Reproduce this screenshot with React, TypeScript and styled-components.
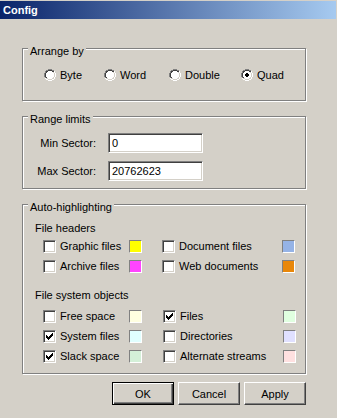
import React from 'react';
import styled, { createGlobalStyle } from 'styled-components';

const GlobalStyle = createGlobalStyle`
    html, body {
        margin: 0;
        padding: 0;
        background: #d4d0c8;
    }
    body {
        font-family: "Liberation Sans", Arial, sans-serif;
        font-size: 11px;
        color: #000;
    }
`;

const Window = styled.div`
    width: 337px;
    height: 418px;
    padding-top: 1px;
    box-sizing: border-box;
    background: #d4d0c8;
`;

const TitleBar = styled.div`
    width: 336px;
    height: 18px;
    display: flex;
    align-items: center;
    padding-left: 3px;
    box-sizing: border-box;
    background: linear-gradient(to right, #0a246a, #a6caf0);
    color: #fff;
    font-weight: bold;
    font-size: 11px;
    line-height: 18px;
`;

const Body = styled.div`
    display: flex;
    flex-direction: column;
    gap: 7px;
    padding: 21px 0 0 22px;
    width: 306px;
`;

const Group = styled.fieldset<{ $pad: string }>`
    margin: 0;
    width: 284px;
    box-sizing: border-box;
    min-width: 0;
    padding: ${(p) => p.$pad};
    border: 1px solid #808080;
    box-shadow: inset 1px 1px 0 #fff, 1px 1px 0 #fff;
`;

const Legend = styled.legend`
    margin-left: 5px;
    padding: 5px 2px 0;
    line-height: 12px;
    background: #d4d0c8;
`;

const RadioRow = styled.div`
    display: grid;
    grid-template-columns: 60px 65px 72px auto;
    padding-left: 21px;
    height: 12px;
`;

const Option = styled.label`
    display: flex;
    align-items: center;
    gap: 4px;
    line-height: 12px;
    white-space: nowrap;
`;

const FieldGrid = styled.div`
    display: grid;
    grid-template-columns: 73px 95px;
    column-gap: 12px;
    row-gap: 8px;
    align-items: center;
`;

const FieldLabel = styled.span`
    text-align: right;
    line-height: 13px;
`;

const TextBox = styled.input`
    box-sizing: border-box;
    width: 95px;
    height: 20px;
    margin: 0;
    padding: 0 3px;
    font: inherit;
    font-size: 11px;
    color: #000;
    background: #fff;
    border: 1px solid;
    border-color: #808080 #fff #fff #808080;
    box-shadow: inset 1px 1px 0 #404040, inset -1px -1px 0 #d4d0c8;
    outline: none;
`;

const Highlights = styled.div`
    padding-left: 11px;
`;

const Section = styled.div`
    display: flex;
    flex-direction: column;
    & + & {
        margin-top: 16px;
    }
`;

const SubHeading = styled.div<{ $after: number }>`
    line-height: 13px;
    margin: 0 0 ${(p) => p.$after}px 1px;
`;

const EntryGrid = styled.div<{ $gap: number }>`
    display: grid;
    grid-template-columns: 99px 133px;
    column-gap: ${(p) => p.$gap}px;
    row-gap: 7px;
    padding-left: 9px;
`;

const Entry = styled.div`
    display: flex;
    align-items: center;
    height: 13px;
`;

const EntryLabel = styled.span`
    flex: 1;
    margin-left: 4px;
    line-height: 13px;
    white-space: nowrap;
`;

const Box = styled.span`
    flex: none;
    width: 13px;
    height: 13px;
    box-sizing: border-box;
    background: #fff;
    border: 1px solid;
    border-color: #808080 #fff #fff #808080;
    box-shadow: inset 1px 1px 0 #404040, inset -1px -1px 0 #d4d0c8;
    display: flex;
    align-items: center;
    justify-content: center;
`;

const Swatch = styled.span<{ $color: string }>`
    flex: none;
    width: 13px;
    height: 13px;
    box-sizing: border-box;
    background: ${(p) => p.$color};
    border: 1px solid;
    border-color: #808080 #fff #fff #808080;
`;

const ButtonRow = styled.div`
    display: flex;
    justify-content: flex-end;
    gap: 4px;
    width: 284px;
    margin-top: 1px;
`;

const Button = styled.button<{ $default?: boolean }>`
    width: 62px;
    height: 23px;
    margin: 0;
    padding: 0;
    font: inherit;
    font-size: 11px;
    color: #000;
    background: #d4d0c8;
    box-sizing: border-box;
    border: 1px solid;
    border-color: ${(p) => (p.$default ? '#000' : '#fff #404040 #404040 #fff')};
    box-shadow: ${(p) =>
        p.$default
            ? 'inset 1px 1px 0 #fff, inset -1px -1px 0 #404040, inset -2px -2px 0 #808080'
            : 'inset -1px -1px 0 #808080'};
`;

// classic 12x12 radio bitmap
const radioMap = [
    '....GGGG....',
    '..GGKKKKGG..',
    '.GKKWWWWKKH.',
    '.GKWWWWWWLH.',
    'GKWWWWWWWWLH',
    'GKWWWWWWWWLH',
    'GKWWWWWWWWLH',
    'GKWWWWWWWWLH',
    '.GKWWWWWWLH.',
    '.HLLWWWWLLH.',
    '..HHLLLLHH..',
    '....HHHH....',
];
const radioColors: Record<string, string> = {
    G: '#808080',
    K: '#404040',
    W: '#ffffff',
    L: '#d4d0c8',
    H: '#ffffff',
};
const dot = [
    [5, 4], [6, 4],
    [4, 5], [5, 5], [6, 5], [7, 5],
    [4, 6], [5, 6], [6, 6], [7, 6],
    [5, 7], [6, 7],
];

const RadioIcon = styled.svg`
    flex: none;
`;

const Radio = ({ checked }: { checked?: boolean }) => (
    <RadioIcon width="12" height="12" viewBox="0 0 12 12" shapeRendering="crispEdges">
        {radioMap.flatMap((row, y) =>
            row.split('').map((c, x) =>
                c === '.' ? null : <rect key={`${x}-${y}`} x={x} y={y} width="1" height="1" fill={radioColors[c]} />
            )
        )}
        {checked && dot.map(([x, y]) => <rect key={`d${x}-${y}`} x={x} y={y} width="1" height="1" fill="#000" />)}
    </RadioIcon>
);

const Check = () => (
    <svg width="7" height="7" viewBox="0 0 7 7" shapeRendering="crispEdges">
        {[2, 3, 4, 3, 2, 1, 0].map((top, x) => (
            <rect key={x} x={x} y={top} width="1" height="3" fill="#000" />
        ))}
    </svg>
);

const CheckBox = ({ checked }: { checked?: boolean }) => <Box>{checked && <Check />}</Box>;

type Item = { label: string; color: string; checked?: boolean };

const headers: Item[] = [
    { label: 'Graphic files', color: '#ffff00' },
    { label: 'Document files', color: '#95b3e6' },
    { label: 'Archive files', color: '#ff44ff' },
    { label: 'Web documents', color: '#e8870a' },
];

const fsObjects: Item[] = [
    { label: 'Free space', color: '#ffffe0' },
    { label: 'Files', color: '#e0ffe0', checked: true },
    { label: 'System files', color: '#e0ffff', checked: true },
    { label: 'Directories', color: '#e0e0ff' },
    { label: 'Slack space', color: '#d4f0d8', checked: true },
    { label: 'Alternate streams', color: '#ffe0e0' },
];

const Entries = ({ items, gap }: { items: Item[]; gap: number }) => (
    <EntryGrid $gap={gap}>
        {items.map((it) => (
            <Entry key={it.label}>
                <CheckBox checked={it.checked} />
                <EntryLabel>{it.label}</EntryLabel>
                <Swatch $color={it.color} />
            </Entry>
        ))}
    </EntryGrid>
);

const arrange = ['Byte', 'Word', 'Double', 'Quad'];

export default function App() {
    return (
        <>
            <GlobalStyle />
            <Window>
                <TitleBar>Config</TitleBar>
                <Body>
                    <Group $pad="12px 0 19px">
                        <Legend>Arrange by</Legend>
                        <RadioRow>
                            {arrange.map((a) => (
                                <Option key={a}>
                                    <Radio checked={a === 'Quad'} />
                                    {a}
                                </Option>
                            ))}
                        </RadioRow>
                    </Group>

                    <Group $pad="8px 0 7px">
                        <Legend>Range limits</Legend>
                        <FieldGrid>
                            <FieldLabel>Min Sector:</FieldLabel>
                            <TextBox defaultValue="0" />
                            <FieldLabel>Max Sector:</FieldLabel>
                            <TextBox defaultValue="20762623" />
                        </FieldGrid>
                    </Group>

                    <Group $pad="9px 0 10px">
                        <Legend>Auto-highlighting</Legend>
                        <Highlights>
                            <Section>
                                <SubHeading $after={5}>File headers</SubHeading>
                                <Entries items={headers} gap={20} />
                            </Section>
                            <Section>
                                <SubHeading $after={8}>File system objects</SubHeading>
                                <Entries items={fsObjects} gap={21} />
                            </Section>
                        </Highlights>
                    </Group>

                    <ButtonRow>
                        <Button $default>OK</Button>
                        <Button>Cancel</Button>
                        <Button>Apply</Button>
                    </ButtonRow>
                </Body>
            </Window>
        </>
    );
}
